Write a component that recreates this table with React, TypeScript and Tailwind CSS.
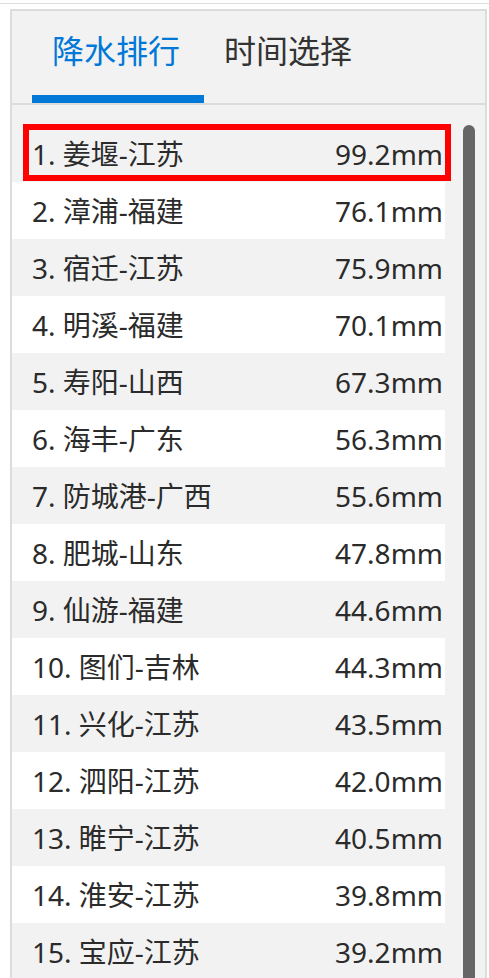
import React from 'react';

type Item = { name: string; value: string };

const items: Item[] = [
  { name: '姜堰-江苏', value: '99.2mm' },
  { name: '漳浦-福建', value: '76.1mm' },
  { name: '宿迁-江苏', value: '75.9mm' },
  { name: '明溪-福建', value: '70.1mm' },
  { name: '寿阳-山西', value: '67.3mm' },
  { name: '海丰-广东', value: '56.3mm' },
  { name: '防城港-广西', value: '55.6mm' },
  { name: '肥城-山东', value: '47.8mm' },
  { name: '仙游-福建', value: '44.6mm' },
  { name: '图们-吉林', value: '44.3mm' },
  { name: '兴化-江苏', value: '43.5mm' },
  { name: '泗阳-江苏', value: '42.0mm' },
  { name: '睢宁-江苏', value: '40.5mm' },
  { name: '淮安-江苏', value: '39.8mm' },
  { name: '宝应-江苏', value: '39.2mm' },
];

export default function App() {
  return (
    <div className="min-h-screen bg-white font-['Noto_Sans','Noto_Sans_CJK_SC',sans-serif] text-[#2b2b2b]">
      <div className="h-[3px]" />
      <div className="h-px bg-[#dddddd]" />
      <div className="pl-[10px] pr-[2px] pt-[5px]">
        <div className="border-2 border-[#dcdcdc] bg-[#f2f2f2]">
          {/* tabs */}
          <div className="flex h-[94px] border-b-2 border-[#dcdcdc] pl-5">
            <div className="flex w-[172px] flex-col justify-between">
              <div className="pl-5 pt-5 text-[32px] leading-[40px] text-[#0078d7]">降水排行</div>
              <div className="h-2 bg-[#0078d7]" />
            </div>
            <div className="pl-5 pt-5 text-[32px] leading-[40px] text-[#333333]">时间选择</div>
          </div>

          {/* ranking list */}
          <div className="relative mt-5 flex">
            <ul className="w-[433px]">
              {items.map((item, i) => (
                <li
                  key={item.name}
                  className={`flex h-[57px] items-center justify-between pl-5 pr-[2px] text-[28px] ${
                    i % 2 === 1 ? 'bg-white' : 'bg-[#f2f2f2]'
                  }`}
                >
                  <span>
                    {i + 1}. {item.name}
                  </span>
                  <span>{item.value}</span>
                </li>
              ))}
            </ul>
            <div className="ml-[18px] w-3 rounded-t-full bg-[#666666]" />
            {/* highlight on first row */}
            <div className="absolute left-[11px] top-[-1px] h-[57px] w-[428px] border-[6px] border-[#ff0000]" />
          </div>
        </div>
      </div>
    </div>
  );
}
